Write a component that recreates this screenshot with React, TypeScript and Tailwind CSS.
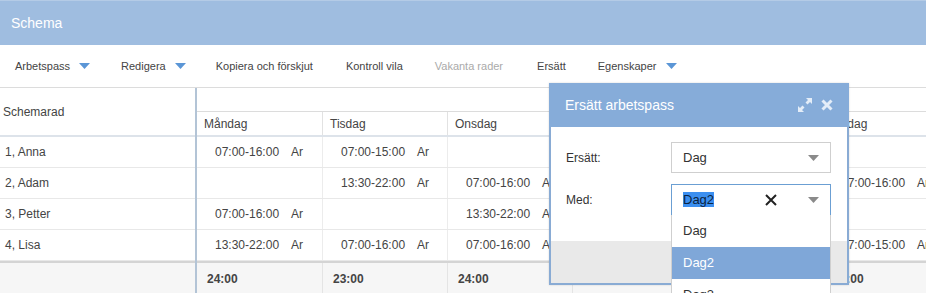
import React from "react";

const font = { fontFamily: '"Liberation Sans", Arial, sans-serif' };

function Caret({ color = "#5b96d6" }: { color?: string }) {
  return (
    <svg width="11" height="6" viewBox="0 0 11 6" className="ml-[9px]">
      <path d="M0 0 L11 0 L5.5 6 Z" fill={color} />
    </svg>
  );
}

type Cell = string | null;
const rows: { name: string; cells: Cell[] }[] = [
  { name: "1, Anna", cells: ["07:00-16:00", "07:00-15:00", null, null, null, null] },
  { name: "2, Adam", cells: [null, "13:30-22:00", "07:00-16:00", null, null, "07:00-16:00"] },
  { name: "3, Petter", cells: ["07:00-16:00", null, "13:30-22:00", null, null, null] },
  { name: "4, Lisa", cells: ["13:30-22:00", "07:00-16:00", "07:00-16:00", null, null, "07:00-15:00"] },
];
const days = ["Måndag", "Tisdag", "Onsdag", "Torsdag", "Fredag", "Lördag", "Söndag"];
const totals = ["24:00", "23:00", "24:00", "", "", "24:00", ""];

export default function App() {
  return (
    <div className="relative w-[926px] h-[293px] overflow-hidden bg-white text-[#333]" style={font}>
      {/* Title bar */}
      <div className="h-[45px] bg-[#9fbde0] border-t border-[#b4cbe6] flex items-center pl-[11px]">
        <span className="text-white text-[14px]">Schema</span>
      </div>

      {/* Toolbar */}
      <div className="h-[43px] flex items-center text-[11px] text-[#444] border-b border-[#dcdcdc]">
        <div className="flex items-center ml-[15px]">Arbetspass<Caret /></div>
        <div className="flex items-center ml-[31px]">Redigera<Caret /></div>
        <div className="ml-[30px]">Kopiera och förskjut</div>
        <div className="ml-[33px]">Kontroll vila</div>
        <div className="ml-[32px] text-[#aaa]">Vakanta rader</div>
        <div className="ml-[34px]">Ersätt</div>
        <div className="flex items-center ml-[32px]">Egenskaper<Caret /></div>
      </div>

      {/* Table */}
      <div className="flex text-[12px] text-[#444]">
        <div className="w-[197px] shrink-0 border-r-2 border-[#b3c4d6]">
          <div className="h-[49px] flex items-center pl-[3px] border-b-2 border-[#dde3ea]">Schemarad</div>
          {rows.map((r) => (
            <div key={r.name} className="h-[31px] flex items-center pl-[5px] border-b border-[#e8e8e8]">
              {r.name}
            </div>
          ))}
          <div className="h-[33px] border-t-2 border-[#d4d4d4] bg-[#f6f6f6]" />
        </div>
        <div className="flex-1">
          <div className="h-[24px] border-b border-[#dcdcdc]" />
          <div className="h-[25px] flex border-b-2 border-[#dde3ea]">
            {days.map((d, i) => (
              <div key={d} className={`w-[125px] shrink-0 flex items-center pl-[7px] ${i > 0 ? "border-l border-[#e2e2e2]" : ""}`}>
                {d}
              </div>
            ))}
          </div>
          {rows.map((r) => (
            <div key={r.name} className="h-[31px] flex border-b border-[#e8e8e8]">
              {days.map((d, i) => (
                <div key={d} className={`w-[125px] shrink-0 flex items-center pl-[18px] ${i > 0 ? "border-l border-[#ececec]" : ""}`}>
                  {r.cells[i] ? (
                    <>
                      <span>{r.cells[i]}</span>
                      <span className="ml-[12px]">Ar</span>
                    </>
                  ) : null}
                </div>
              ))}
            </div>
          ))}
          <div className="h-[33px] flex border-t-2 border-[#d4d4d4] bg-[#f6f6f6]">
            {days.map((d, i) => (
              <div key={d} className={`w-[125px] shrink-0 flex items-center pl-[10px] font-bold ${i > 0 ? "border-l border-[#e4e4e4]" : ""}`}>
                {totals[i]}
              </div>
            ))}
          </div>
        </div>
      </div>

      {/* Dialog */}
      <div className="absolute left-[549px] top-[83px] w-[300px] h-[202px] border-2 border-t-0 border-[#89abd4] bg-white flex flex-col shadow-[0_0_2px_rgba(0,0,0,0.15)]">
        <div className="h-[44px] -mx-[2px] bg-[#86acd9] flex items-center pl-[16px] pr-[16px]">
          <span className="text-white text-[14px] flex-1">Ersätt arbetspass</span>
          <svg width="14" height="14" viewBox="0 0 14 14" className="mr-[9px]">
            <g fill="#e4edf8">
              <path d="M8 0 L14 0 L14 6 L12 4 L9.5 6.5 L7.5 4.5 L10 2 Z" />
              <path d="M6 14 L0 14 L0 8 L2 10 L4.5 7.5 L6.5 9.5 L4 12 Z" />
            </g>
          </svg>
          <svg width="12" height="12" viewBox="0 0 12 12">
            <path d="M1.5 1.5 L10.5 10.5 M10.5 1.5 L1.5 10.5" stroke="#e4edf8" strokeWidth="3" strokeLinecap="butt" />
          </svg>
        </div>
        <div className="flex-1 flex flex-col text-[12px] text-[#333]">
          <div className="flex items-center mt-[15px] pl-[15px]">
            <span className="w-[105px]">Ersätt:</span>
            <div className="w-[160px] h-[31px] border border-[#cfcfcf] flex items-center pl-[11px] pr-[11px]">
              <span className="flex-1 text-[13px]">Dag</span>
              <Caret color="#8a8a8a" />
            </div>
          </div>
          <div className="flex items-center mt-[11px] pl-[15px]">
            <span className="w-[105px]">Med:</span>
            <div className="relative w-[160px] h-[32px] border border-[#6b9fd3] flex items-center pl-[11px] pr-[11px]">
              <span className="flex-1 text-[13px]">
                <span className="bg-[#3b8ff0] text-[#0b2340]">Dag2</span>
              </span>
              <svg width="12" height="12" viewBox="0 0 12 12" className="mr-[22px]">
                <path d="M1 1 L11 11 M11 1 L1 11" stroke="#222" strokeWidth="2" />
              </svg>
              <Caret color="#8a8a8a" />
            </div>
          </div>
          <div className="mt-auto h-[42px] bg-[#e9e9e9]" />
        </div>
      </div>

      {/* Dropdown list */}
      <div className="absolute left-[671px] top-[215px] w-[160px] h-[90px] bg-white border-x border-[#cfcfcf] text-[13px] text-[#333]">
        <div className="h-[32px] flex items-center pl-[11px]">Dag</div>
        <div className="h-[32px] flex items-center pl-[11px] bg-[#7fa7d8] text-white">Dag2</div>
        <div className="h-[32px] flex items-center pl-[11px]">Dag3</div>
      </div>
    </div>
  );
}
